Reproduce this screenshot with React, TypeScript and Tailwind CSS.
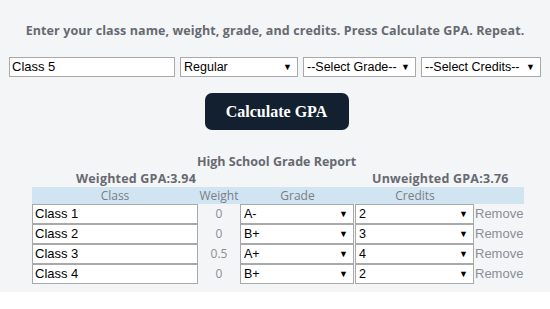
import React from "react";

const rows = [
  { name: "Class 1", weight: "0", grade: "A-", credits: "2" },
  { name: "Class 2", weight: "0", grade: "B+", credits: "3" },
  { name: "Class 3", weight: "0.5", grade: "A+", credits: "4" },
  { name: "Class 4", weight: "0", grade: "B+", credits: "2" },
];

function FakeSelect({ value, className }: { value: string; className: string }) {
  return (
    <div
      className={`flex items-center justify-between bg-white border border-[#a9a9a9] pl-[3px] pr-[5px] text-[12.5px] text-black leading-none whitespace-nowrap ${className}`}
      style={{ fontFamily: '"Liberation Sans", Arial, sans-serif' }}
    >
      <span>{value}</span>
      <span className="text-[9px] ml-[3px]">▼</span>
    </div>
  );
}

export default function App() {
  const sans = { fontFamily: '"Open Sans", "Noto Sans", sans-serif' };
  const arial = { fontFamily: '"Liberation Sans", Arial, sans-serif' };

  return (
    <div className="w-[550px] h-[309px] bg-white">
      <div className="bg-[#f4f5f7] pb-[8px]" style={sans}>
        {/* Instructions */}
        <div className="pt-[22px] text-center text-[12.5px] font-bold text-[#666a70] leading-[18px] tracking-[0.1px]">
          Enter your class name, weight, grade, and credits. Press Calculate GPA. Repeat.
        </div>

        {/* Entry row */}
        <div className="flex gap-[5px] pl-[9px] mt-[17px]">
          <div
            className="w-[166px] h-[20px] bg-white border border-[#a9a9a9] flex items-center pl-[2px] text-[13px] text-black"
            style={arial}
          >
            Class 5
          </div>
          <FakeSelect value="Regular" className="w-[118px] h-[20px]" />
          <FakeSelect value="--Select Grade--" className="w-[113px] h-[20px]" />
          <FakeSelect value="--Select Credits--" className="w-[120px] h-[20px]" />
        </div>

        {/* Button */}
        <div className="flex justify-center mt-[16px] pl-[3px]">
          <button
            className="w-[144px] h-[37px] rounded-[7px] bg-[#13202f] text-white text-[16px] font-bold"
            style={{ fontFamily: '"Liberation Serif", "Times New Roman", serif' }}
          >
            Calculate GPA
          </button>
        </div>

        {/* Report heading */}
        <div className="mt-[24px] pl-[3px] text-center text-[12.5px] font-bold text-[#666a70] leading-[16px]">
          High School Grade Report
        </div>
        <div className="flex text-[12.5px] font-bold text-[#666a70] leading-[16px] mt-[1px] tracking-[0.2px]">
          <div className="w-[372px] pl-[76px]">Weighted GPA:3.94</div>
          <div>Unweighted GPA:3.76</div>
        </div>

        {/* Table */}
        <div className="ml-[32px] w-[492px]">
          <div className="flex h-[17px] bg-[#d0e4f2] text-[12px] text-[#7a7e84] leading-[17px]">
            <div className="w-[166px] text-center">Class</div>
            <div className="w-[42px] text-center">Weight</div>
            <div className="w-[115px] text-center">Grade</div>
            <div className="w-[120px] text-center">Credits</div>
          </div>
          <div className="flex flex-col">
            {rows.map((r) => (
              <div key={r.name} className="flex h-[20px] items-center">
                <div
                  className="w-[166px] h-[20px] bg-white border border-[#a9a9a9] flex items-center pl-[2px] text-[13px] text-black"
                  style={arial}
                >
                  {r.name}
                </div>
                <div className="w-[42px] text-center text-[12px] text-[#8a8e94]">{r.weight}</div>
                <FakeSelect value={r.grade} className="w-[114px] h-[20px]" />
                <FakeSelect value={r.credits} className="w-[119px] h-[20px] ml-[1px]" />
                <div className="pl-[1px] text-[13px] text-[#8a8e94]" style={arial}>
                  Remove
                </div>
              </div>
            ))}
          </div>
        </div>
      </div>
    </div>
  );
}
